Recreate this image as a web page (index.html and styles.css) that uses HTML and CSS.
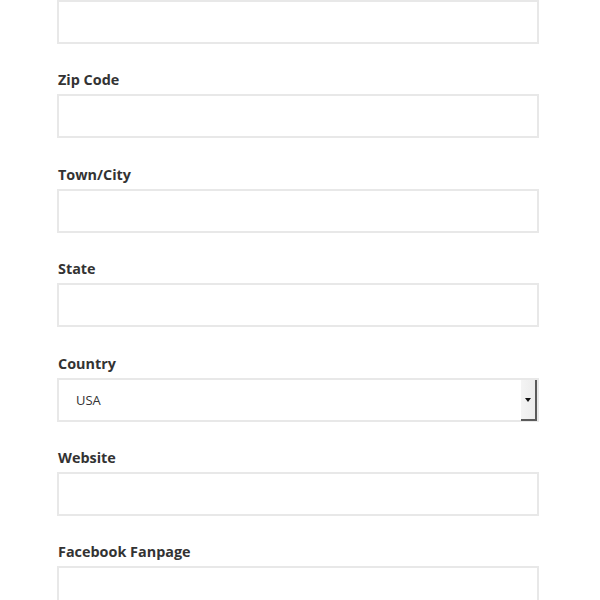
FILE: index.html
```html
<!DOCTYPE html>
<html lang="en">
<head>
<meta charset="utf-8">
<title>Address form</title>
<link rel="stylesheet" href="styles.css">
</head>
<body>
<form class="form">
  <div class="field">
    <input class="input" type="text">
  </div>
  <div class="field">
    <label class="label">Zip Code</label>
    <input class="input" type="text">
  </div>
  <div class="field">
    <label class="label">Town/City</label>
    <input class="input" type="text">
  </div>
  <div class="field">
    <label class="label">State</label>
    <input class="input" type="text">
  </div>
  <div class="field">
    <label class="label">Country</label>
    <div class="select-wrap">
      <select class="select">
        <option>USA</option>
      </select>
      <span class="select-btn"><span class="select-arrow"></span></span>
    </div>
  </div>
  <div class="field">
    <label class="label">Website</label>
    <input class="input" type="text">
  </div>
  <div class="field">
    <label class="label">Facebook Fanpage</label>
    <input class="input" type="text">
  </div>
</form>
</body>
</html>
```

FILE: styles.css
```css
html, body {
  margin: 0;
  padding: 0;
  background: #ffffff;
}

body {
  font-family: "Open Sans", "Liberation Sans", sans-serif;
  color: #333333;
}

.form {
  width: 482px;
  margin-left: 57px;
  display: flex;
  flex-direction: column;
  gap: 26.4px;
}

.field {
  display: flex;
  flex-direction: column;
}

.label {
  display: block;
  font-size: 14.4px;
  font-weight: 700;
  line-height: 20px;
  color: #333333;
  margin-bottom: 4px;
  padding-left: 1px;
}

.input,
.select {
  box-sizing: border-box;
  width: 100%;
  height: 44px;
  margin: 0;
  border: 2px solid #e8e8e8;
  border-radius: 0;
  background: #ffffff;
  outline: none;
  font-family: "Open Sans", "Liberation Sans", sans-serif;
  font-size: 13px;
  color: #333333;
}

.select-wrap {
  position: relative;
}

.select {
  display: block;
  -webkit-appearance: none;
  appearance: none;
  padding: 0 0 0 17px;
}

.select-btn {
  position: absolute;
  top: 2px;
  right: 2px;
  width: 16px;
  height: 41px;
  box-sizing: border-box;
  background: linear-gradient(to right, #f4f4f4, #ececec);
  border-right: 2px solid #5a5a5a;
  border-bottom: 2px solid #5a5a5a;
  display: flex;
  align-items: center;
  justify-content: center;
}

.select-arrow {
  width: 0;
  height: 0;
  border-left: 3px solid transparent;
  border-right: 3px solid transparent;
  border-top: 4px solid #111111;
  margin-top: 1px;
}
```
